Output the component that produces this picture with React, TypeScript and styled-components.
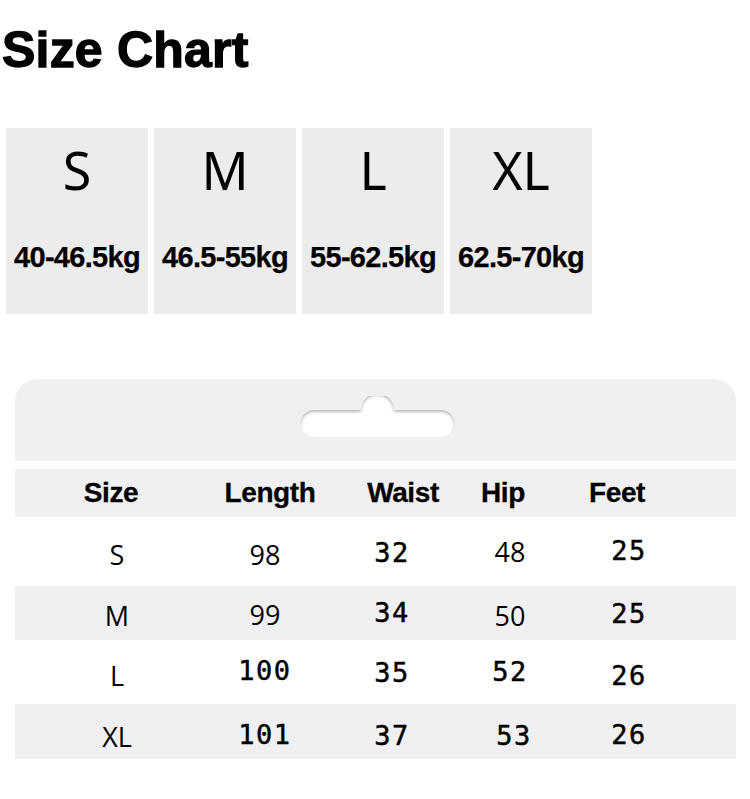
import styled, { createGlobalStyle } from 'styled-components';

const GlobalStyle = createGlobalStyle`
  body {
    margin: 0;
    background: #ffffff;
    color: #000000;
    font-family: 'Liberation Sans', Arial, sans-serif;
  }
`;

const Page = styled.div`
  width: 750px;
  height: 799px;
  overflow: hidden;
  background: #ffffff;
`;

const Title = styled.h1`
  margin: 25px 0 0 2px;
  font-family: 'Liberation Sans', Arial, sans-serif;
  font-weight: 700;
  font-size: 50px;
  line-height: 50px;
  letter-spacing: 0.2px;
  -webkit-text-stroke: 1.3px #000;
`;

const Cards = styled.div`
  display: flex;
  gap: 6px;
  margin: 53px 0 0 6px;
`;

const Card = styled.div`
  width: 142px;
  height: 186px;
  background: #ececec;
  display: flex;
  flex-direction: column;
  align-items: center;
  box-sizing: border-box;
  padding-top: 16px;
`;

const CardSize = styled.div`
  font-family: 'Noto Sans', 'Open Sans', sans-serif;
  font-weight: 400;
  font-size: 52px;
  line-height: 52px;
`;

const CardWeight = styled.div`
  margin-top: 47px;
  font-family: 'Liberation Sans', Arial, sans-serif;
  font-weight: 700;
  font-size: 29px;
  line-height: 29px;
  letter-spacing: -0.7px;
  white-space: nowrap;
  -webkit-text-stroke: 0.25px #000;
`;

const Panel = styled.div`
  margin: 65px 0 0 15px;
  width: 721px;
`;

const Hanger = styled.div`
  height: 82px;
  background: #f0f0f2;
  border-radius: 22px 22px 0 0;
  display: flex;
  justify-content: center;
  box-sizing: border-box;
  padding: 17px 0 0 4px;
  margin-bottom: 8px;
`;

const Row = styled.div<{ $h: number; $shade?: boolean }>`
  display: grid;
  grid-template-columns: 204px 92px 162px 74px 164px 1fr;
  align-items: center;
  height: ${(p) => p.$h}px;
  background: ${(p) => (p.$shade ? '#f0f0f2' : '#ffffff')};
`;

const HeadCell = styled.div<{ $dx?: number }>`
  text-align: center;
  font-family: 'Liberation Sans', Arial, sans-serif;
  font-weight: 700;
  font-size: 28px;
  line-height: 28px;
  letter-spacing: -0.4px;
  white-space: nowrap;
  -webkit-text-stroke: 0.3px #000;
  transform: translateX(${(p) => p.$dx ?? 0}px);
`;

const Cell = styled.div<{ $bold?: boolean; $dx?: number; $dy?: number }>`
  text-align: center;
  white-space: nowrap;
  font-family: ${(p) =>
    p.$bold ? "'DejaVu Sans Mono', monospace" : "'Open Sans', 'Noto Sans', sans-serif"};
  font-weight: 400;
  font-size: 27px;
  line-height: 30px;
  letter-spacing: ${(p) => (p.$bold ? '1.5px' : '0')};
  -webkit-text-stroke: ${(p) => (p.$bold ? '0.45px #000' : '0')};
  transform: translate(${(p) => p.$dx ?? 0}px, ${(p) => p.$dy ?? 0}px);
`;

function HookSlot() {
  return (
    <svg width="161" height="44" viewBox="0 0 161 44">
      <defs>
        <filter id="inner" x="-10%" y="-30%" width="120%" height="160%">
          <feOffset dx="0" dy="2" />
          <feGaussianBlur stdDeviation="1.6" result="b" />
          <feComposite operator="out" in="SourceGraphic" in2="b" result="s" />
          <feFlood floodColor="#9a9a9a" floodOpacity="0.8" />
          <feComposite operator="in" in2="s" />
          <feComposite operator="over" in2="SourceGraphic" />
        </filter>
      </defs>
      <path
        d="M17 14 H64 A16.5 16.5 0 0 1 97 14 H144 A13.5 13.5 0 0 1 144 41 H17 A13.5 13.5 0 0 1 17 14 Z"
        fill="#ffffff"
        filter="url(#inner)"
      />
    </svg>
  );
}

const cards = [
  { size: 'S', weight: '40-46.5kg' },
  { size: 'M', weight: '46.5-55kg' },
  { size: 'L', weight: '55-62.5kg' },
  { size: 'XL', weight: '62.5-70kg' },
];

type C = { v: string; bold?: boolean; dx?: number; dy?: number };

const rows: { h: number; shade: boolean; cells: C[] }[] = [
  {
    h: 69,
    shade: false,
    cells: [{ v: 'S', dy: 3 }, { v: '98', dy: 3 }, { v: '32', bold: true, dy: 1 }, { v: '48', dy: 0 }, { v: '25', bold: true, dy: -1 }],
  },
  {
    h: 54,
    shade: true,
    cells: [{ v: 'M', dy: 3 }, { v: '99', dy: 2 }, { v: '34', bold: true, dy: 0 }, { v: '50', dy: 3 }, { v: '25', bold: true, dy: 1 }],
  },
  {
    h: 64,
    shade: false,
    cells: [{ v: 'L', dy: 4 }, { v: '100', bold: true, dy: -1 }, { v: '35', bold: true, dy: 1 }, { v: '52', bold: true, dy: 0 }, { v: '26', bold: true, dy: 4 }],
  },
  {
    h: 55,
    shade: true,
    cells: [{ v: 'XL', dy: 5 }, { v: '101', bold: true, dy: 3 }, { v: '37', bold: true, dy: 4 }, { v: '53', bold: true, dx: 4, dy: 4 }, { v: '26', bold: true, dy: 3 }],
  },
];

export default function App() {
  return (
    <Page>
      <GlobalStyle />
      <Title>Size Chart</Title>
      <Cards>
        {cards.map((c) => (
          <Card key={c.size}>
            <CardSize>{c.size}</CardSize>
            <CardWeight>{c.weight}</CardWeight>
          </Card>
        ))}
      </Cards>
      <Panel>
        <Hanger>
          <HookSlot />
        </Hanger>
        <Row $h={48} $shade>
          <HeadCell $dx={-6}>Size</HeadCell>
          <HeadCell $dx={5}>Length</HeadCell>
          <HeadCell $dx={11}>Waist</HeadCell>
          <HeadCell $dx={-7}>Hip</HeadCell>
          <HeadCell $dx={-12}>Feet</HeadCell>
        </Row>
        {rows.map((r, i) => (
          <Row key={i} $h={r.h} $shade={r.shade}>
            {r.cells.map((c, j) => (
              <Cell key={j} $bold={c.bold} $dx={c.dx} $dy={c.dy}>
                {c.v}
              </Cell>
            ))}
          </Row>
        ))}
      </Panel>
    </Page>
  );
}
